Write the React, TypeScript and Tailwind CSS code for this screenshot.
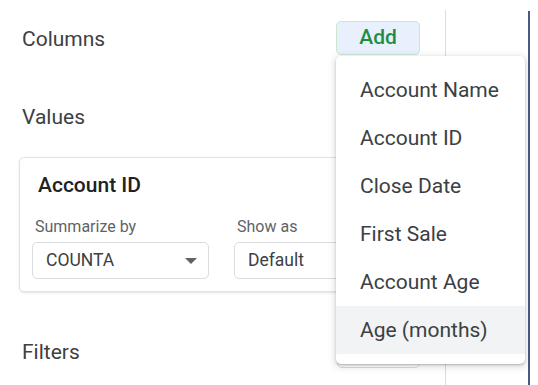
import React from 'react';

const fields = ['Account Name', 'Account ID', 'Close Date', 'First Sale', 'Account Age', 'Age (months)'];

function AddButton({ active }: { active?: boolean }) {
  return (
    <button
      className={
        active
          ? 'h-[34px] w-[84px] rounded-[5px] border border-[#c9e6d1] bg-[#e8f0fe] text-[21px] font-medium text-[#1e8e3e]'
          : 'h-[32px] w-[83px] rounded-[5px] border border-[#dadce0] bg-white text-[21px] font-medium text-[#1e8e3e]'
      }
    >
      Add
    </button>
  );
}

function Select({ value, width }: { value: string; width: string }) {
  return (
    <div className={`flex h-[37px] items-center justify-between rounded-[5px] border border-[#dadce0] pl-[13px] pr-[11px] ${width}`}>
      <span className="text-[17.5px] text-[#3c4043]">{value}</span>
      <svg width="12" height="6" viewBox="0 0 12 6">
        <path d="M0 0h12L6 6z" fill="#5f6368" />
      </svg>
    </div>
  );
}

export default function App() {
  return (
    <div className="relative flex h-[385px] w-[538px] overflow-hidden bg-white font-['Roboto',sans-serif]">
      <div className="mt-[10px] w-[446px] border-r border-[#dadce0] pl-[19px] pr-[25px]">
        <div className="mt-[11px] flex h-[34px] items-center justify-between">
          <span className="pl-[3px] pt-[3px] text-[21px] text-[#3c4043]">Columns</span>
          <AddButton active />
        </div>

        {/* the Values "Add" button sits under the open menu */}
        <div className="mt-[45px] flex h-[34px] items-center">
          <span className="pl-[3px] pt-[2px] text-[21px] text-[#3c4043]">Values</span>
        </div>

        <div className="mt-[23px] h-[135px] rounded-[5px] border border-[#e3e3e3] px-[12px] pt-[13px] shadow-[0_1px_2px_rgba(60,64,67,0.15)]">
          <div className="h-[28px] pl-[6px] text-[21px] font-medium leading-[28px] text-[#202124]">Account ID</div>
          <div className="mt-[18px] flex gap-[25px]">
            <div className="flex flex-col gap-[5px]">
              <span className="pl-[3px] text-[16px] leading-[20px] text-[#5f6368]">Summarize by</span>
              <Select value="COUNTA" width="w-[177px]" />
            </div>
            <div className="flex flex-col gap-[5px]">
              <span className="pl-[3px] text-[16px] leading-[20px] text-[#5f6368]">Show as</span>
              <Select value="Default" width="w-[162px]" />
            </div>
          </div>
        </div>

        <div className="mt-[44px] flex h-[32px] items-center justify-between">
          <span className="pl-[3px] pt-[2px] text-[21px] text-[#3c4043]">Filters</span>
          <AddButton />
        </div>
      </div>

      <div className="ml-[82px] mt-[11px] w-[2px] bg-[#4a5a80]" />

      <div className="absolute left-[336px] top-[56px] w-[189px] rounded-[5px] bg-white py-[10px] shadow-[0_2px_6px_2px_rgba(60,64,67,0.15),0_1px_2px_rgba(60,64,67,0.3)]">
        {fields.map((f, i) => (
          <div
            key={f}
            className={`flex h-[48px] items-center pl-[24px] pt-[2px] text-[21px] text-[#3c4043] ${i === fields.length - 1 ? 'bg-[#f1f3f4]' : ''}`}
          >
            {f}
          </div>
        ))}
      </div>
    </div>
  );
}
